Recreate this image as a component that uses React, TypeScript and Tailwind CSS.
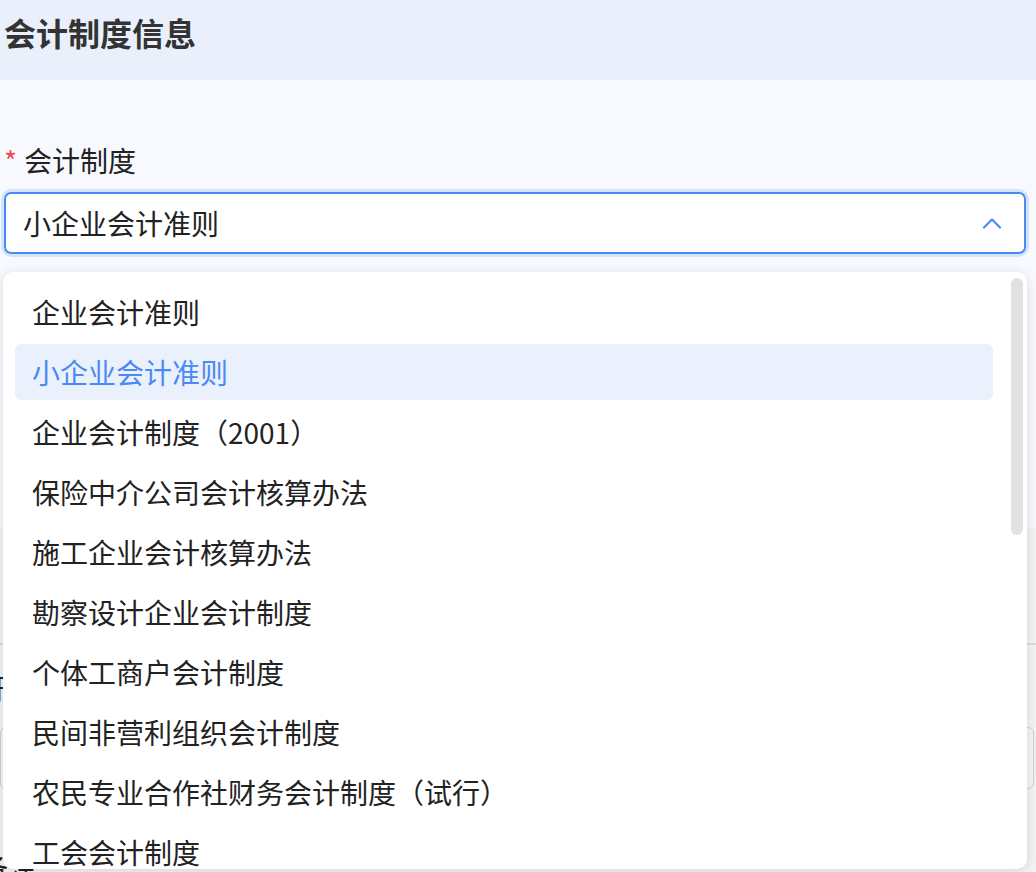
const options = [
  "企业会计准则",
  "小企业会计准则",
  "企业会计制度（2001）",
  "保险中介公司会计核算办法",
  "施工企业会计核算办法",
  "勘察设计企业会计制度",
  "个体工商户会计制度",
  "民间非营利组织会计制度",
  "农民专业合作社财务会计制度（试行）",
  "工会会计制度",
];

const selected = "小企业会计准则";

function ChevronUp() {
  return (
    <svg width="20" height="12" viewBox="0 0 20 12" fill="none">
      <path d="M2 10.5 L10 2.5 L18 10.5" stroke="#4a8af4" strokeWidth="2.2" strokeLinecap="round" strokeLinejoin="round" />
    </svg>
  );
}

export default function App() {
  return (
    <div
      className="relative w-[1036px] h-[872px] overflow-hidden bg-[#f7f9fe] text-[#222]"
      style={{ fontFamily: '"Noto Sans CJK SC", "Noto Sans", sans-serif' }}
    >
      {/* 区块标题 */}
      <div className="h-[80px] bg-[#e9f0fc] px-[4px] pt-[11px]">
        <h2 className="text-[32px] leading-[42px] font-bold text-[#333]">会计制度信息</h2>
      </div>

      {/* 表单 */}
      <div className="h-[448px] px-[4px] pt-[62px]">
        <div className="flex items-center h-[36px] text-[28px] leading-[36px]">
          <span className="text-[#f04a4a] mr-[7px] text-[28px]">*</span>
          <span>会计制度</span>
        </div>
        <div className="mt-[14px] mr-[6px] rounded-[8px] ring-[3px] ring-[#d3e4fd]">
          <div className="h-[62px] flex items-center justify-between pl-[17px] pr-[22px] bg-white border-2 border-[#4a8af4] rounded-[7px]">
            <span className="text-[28px]">{selected}</span>
            <ChevronUp />
          </div>
        </div>
      </div>

      {/* 下方被遮挡的内容 */}
      <div className="h-[117px] bg-[#f3f3f3] border-b-2 border-[#dcdcdc]" />
      <div className="bg-[#f3f3f3] h-[300px]">
        <div className="text-[28px] leading-[36px] pt-[24px] -ml-[20px]">开票</div>
        <div className="mt-[22px] h-[62px] mr-[2px] border border-[#cfcfcf] rounded-[6px] bg-[#f5f5f5]" />
        <div className="text-[28px] leading-[36px] mt-[60px] -ml-[20px]">备注</div>
      </div>

      {/* 下拉面板 */}
      <div className="absolute left-[3px] top-[272px] w-[1024px] h-[597px] bg-white rounded-[10px] shadow-[0_2px_12px_rgba(0,0,0,0.12)] overflow-hidden">
        <ul className="pt-[12px] pl-[12px] pr-[34px] flex flex-col gap-[4px]">
          {options.map((opt) => {
            const active = opt === selected;
            return (
              <li
                key={opt}
                className={`h-[56px] flex items-center pl-[17px] rounded-[6px] text-[28px] whitespace-nowrap ${
                  active ? "bg-[#eaf1fd] text-[#4a8af4]" : "text-[#222]"
                }`}
              >
                {opt}
              </li>
            );
          })}
        </ul>
        <div className="absolute right-[4px] top-[6px] w-[12px] h-[257px] rounded-full bg-[#e1e1e1]" />
      </div>
    </div>
  );
}
